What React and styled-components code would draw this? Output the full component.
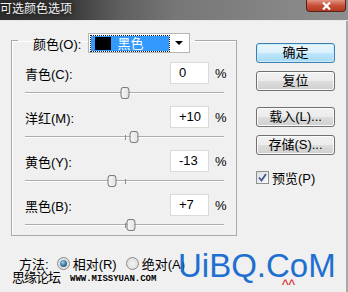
import styled, { createGlobalStyle } from "styled-components";

const GlobalStyle = createGlobalStyle`
  html, body {
    margin: 0;
    padding: 0;
  }
  body {
    background: #f0f0f0;
    font-family: "Liberation Sans", "Noto Sans CJK SC", sans-serif;
    font-size: 13px;
    color: #000;
    overflow: hidden;
  }
`;

const Window = styled.div`
  position: relative;
  width: 348px;
  height: 292px;
  overflow: hidden;
  display: flex;
  flex-direction: column;
`;

const TitleBar = styled.div`
  height: 20px;
  flex: none;
  display: flex;
  justify-content: space-between;
  align-items: flex-start;
  background: linear-gradient(90deg, #2e2e2e 0%, #393939 20%, #5e5e5e 34%, #767676 50%, #838383 75%, #8e8e8e 100%);
  border-bottom: 1px solid #e9e9e9;
`;

const Title = styled.div`
  line-height: 19px;
  font-size: 12px;
  color: #f4f4f4;
  text-shadow: 0 0 6px #000;
`;

const CloseButton = styled.div`
  width: 40px;
  height: 12px;
  margin-right: 2px;
  box-sizing: border-box;
  border: 1px solid #5a2318;
  border-top: none;
  border-radius: 0 0 4px 4px;
  background: linear-gradient(#e39482, #c65038 50%, #b23a22);
  display: flex;
  align-items: center;
  justify-content: center;
`;

const Body = styled.div`
  flex: 1;
  display: flex;
  padding: 6px 0 0 11px;
  border-right: 2px solid #a9a9a9;
`;

const LeftColumn = styled.div`
  width: 226px;
  display: flex;
  flex-direction: column;
`;

const GroupBox = styled.fieldset`
  margin: 0;
  min-width: 0;
  box-sizing: border-box;
  width: 226px;
  padding: 9px 10px 1px 13px;
  border: 1px solid #a9a9a9;
  box-shadow: inset 1px 1px 0 #ffffff;
`;

const Legend = styled.legend`
  margin-left: -7px;
  padding: 6px 5px 0 15px;
  display: flex;
  align-items: center;
  gap: 7px;
`;

const Dropdown = styled.div`
  width: 102px;
  height: 20px;
  box-sizing: border-box;
  border: 1px solid #b5b5b5;
  background: #fff;
  display: flex;
  align-items: center;
  padding: 0 2px;
`;

const Selected = styled.div`
  width: 78px;
  height: 15px;
  box-sizing: border-box;
  background: #3399ff;
  outline: 1px dotted #1a1a1a;
  display: flex;
  align-items: center;
  gap: 6px;
  padding-left: 4px;
  color: #fff;
  line-height: 15px;
`;

const Swatch = styled.span`
  width: 16px;
  height: 13px;
  background: #000;
`;

const ArrowArea = styled.div`
  flex: 1;
  display: flex;
  justify-content: center;
  align-items: center;
  padding-left: 2px;
`;

const Arrow = styled.span`
  width: 0;
  height: 0;
  border-left: 4px solid transparent;
  border-right: 4px solid transparent;
  border-top: 4px solid #000;
`;

const Channels = styled.div`
  display: flex;
  flex-direction: column;
  gap: 4px;
`;

const Row = styled.div`
  height: 22px;
  display: flex;
  align-items: center;
`;

const Label = styled.span`
  flex: 1;
`;

const ValueBox = styled.div`
  width: 39px;
  height: 22px;
  box-sizing: border-box;
  border: 1px solid #dadada;
  background: #fff;
  padding-left: 8px;
  line-height: 20px;
`;

const Percent = styled.span`
  margin-left: 6px;
  width: 11px;
`;

const Slider = styled.div`
  position: relative;
  height: 18px;
  box-sizing: border-box;
  padding-top: 8px;
  margin-right: 2px;
`;

const Track = styled.div`
  height: 0;
  border-top: 1px solid #adadad;
  border-bottom: 1px solid #ffffff;
`;

const Tick = styled.div`
  position: absolute;
  left: 50%;
  top: 7px;
  width: 1px;
  height: 5px;
  background: #8c8c8c;
`;

const Thumb = styled.div`
  position: absolute;
  top: 3px;
  width: 9px;
  height: 12px;
  box-sizing: border-box;
  transform: translateX(-50%);
  border: 1px solid #7c7c7c;
  border-radius: 3px / 4px;
  background: linear-gradient(90deg, #f7f7f7, #e2e2e2);
`;

const MethodRow = styled.div`
  margin-top: 19px;
  padding-left: 8px;
  height: 16px;
  display: flex;
  align-items: center;
`;

const Radio = styled.span`
  width: 13px;
  height: 13px;
  box-sizing: border-box;
  margin-left: ${(p) => p.$gap}px;
  margin-right: 3px;
  border-radius: 50%;
  border: 1px solid #8a8a8a;
  background: radial-gradient(circle, #f4f4f4, #d6d6d6);
  display: flex;
  align-items: center;
  justify-content: center;
  &::after {
    content: "";
    width: 7px;
    height: 7px;
    border-radius: 50%;
    background: ${(p) =>
      p.$checked ? "radial-gradient(circle at 40% 35%, #9fd0ee, #2a6c95 60%, #174a6a)" : "transparent"};
  }
`;

const RightColumn = styled.div`
  width: 79px;
  margin-left: 19px;
  padding-top: 16px;
  display: flex;
  flex-direction: column;
`;

const Button = styled.div`
  height: 20px;
  box-sizing: border-box;
  margin-top: ${(p) => p.$space}px;
  border: 1px solid ${(p) => (p.$primary ? "#3c7fb1" : "#707070")};
  border-radius: 3px;
  box-shadow: inset 0 0 0 1px ${(p) => (p.$primary ? "#c8ecfc" : "#fbfbfb")};
  background: ${(p) =>
    p.$primary
      ? "linear-gradient(#eaf6fd, #d9f0fc 50%, #bee6fd 51%, #a7d9f5)"
      : "linear-gradient(#f2f2f2, #ebebeb 50%, #dddddd 51%, #cfcfcf)"};
  text-align: center;
  line-height: 18px;
`;

const CheckRow = styled.div`
  margin-top: 13px;
  display: flex;
  align-items: center;
  gap: 3px;
`;

const CheckBox = styled.span`
  width: 13px;
  height: 13px;
  box-sizing: border-box;
  border: 1px solid #8e8f8f;
  background: linear-gradient(135deg, #dcdcdc, #fbfbfb);
  display: flex;
  align-items: center;
  justify-content: center;
`;

const Brand = styled.div`
  position: absolute;
  left: 178px;
  top: 249px;
  font-size: 33px;
  line-height: 33px;
  color: #1d6fd0;
  white-space: nowrap;
`;

const ForumMark = styled.div`
  position: absolute;
  left: 12px;
  top: 269px;
  font-size: 13px;
  line-height: 16px;
  letter-spacing: -1px;
  font-family: "Noto Sans CJK SC", sans-serif;
`;

const SiteMark = styled.div`
  position: absolute;
  left: 70px;
  top: 274px;
  font-family: "Liberation Mono", monospace;
  font-weight: bold;
  font-size: 9px;
  line-height: 10px;
  text-transform: uppercase;
`;

const Carets = styled.div`
  position: absolute;
  left: 282px;
  top: 278px;
  font-size: 14px;
  line-height: 14px;
  color: #d42020;
`;

const channels = [
  { label: "青色(C):", value: 0 },
  { label: "洋红(M):", value: 10 },
  { label: "黄色(Y):", value: -13 },
  { label: "黑色(B):", value: 7 },
];

const format = (v) => (v > 0 ? `+${v}` : `${v}`);

const App = () => {
  return (
    <Window>
      <GlobalStyle />
      <TitleBar>
        <Title>可选颜色选项</Title>
        <CloseButton>
          <svg width="11" height="8" viewBox="0 0 11 8">
            <path d="M2 0.5 L9 7.5 M9 0.5 L2 7.5" stroke="#fff" strokeWidth="2.2" />
          </svg>
        </CloseButton>
      </TitleBar>
      <Body>
        <LeftColumn>
          <GroupBox>
            <Legend>
              <span>颜色(O):</span>
              <Dropdown>
                <Selected>
                  <Swatch />
                  <span>黑色</span>
                </Selected>
                <ArrowArea>
                  <Arrow />
                </ArrowArea>
              </Dropdown>
            </Legend>
            <Channels>
              {channels.map((c) => (
                <div key={c.label}>
                  <Row>
                    <Label>{c.label}</Label>
                    <ValueBox>{format(c.value)}</ValueBox>
                    <Percent>%</Percent>
                  </Row>
                  <Slider>
                    <Track />
                    <Tick />
                    <Thumb style={{ left: `${50 + c.value / 2}%` }} />
                  </Slider>
                </div>
              ))}
            </Channels>
          </GroupBox>
          <MethodRow>
            <span>方法:</span>
            <Radio $checked $gap={8} />
            <span>相对(R)</span>
            <Radio $gap={9} />
            <span>绝对(A)</span>
          </MethodRow>
        </LeftColumn>
        <RightColumn>
          <Button $primary $space={0}>确定</Button>
          <Button $space={8}>复位</Button>
          <Button $space={16}>载入(L)...</Button>
          <Button $space={8}>存储(S)...</Button>
          <CheckRow>
            <CheckBox>
              <svg width="9" height="9" viewBox="0 0 9 9">
                <path d="M1 4.5 L3.5 7.5 L8 1" stroke="#3d5a9e" strokeWidth="1.8" fill="none" />
              </svg>
            </CheckBox>
            <span>预览(P)</span>
          </CheckRow>
        </RightColumn>
      </Body>
      <ForumMark>思缘论坛</ForumMark>
      <SiteMark>www.missyuan.com</SiteMark>
      <Brand>UiBQ.CoM</Brand>
      <Carets>^^</Carets>
    </Window>
  );
};

export default App;
